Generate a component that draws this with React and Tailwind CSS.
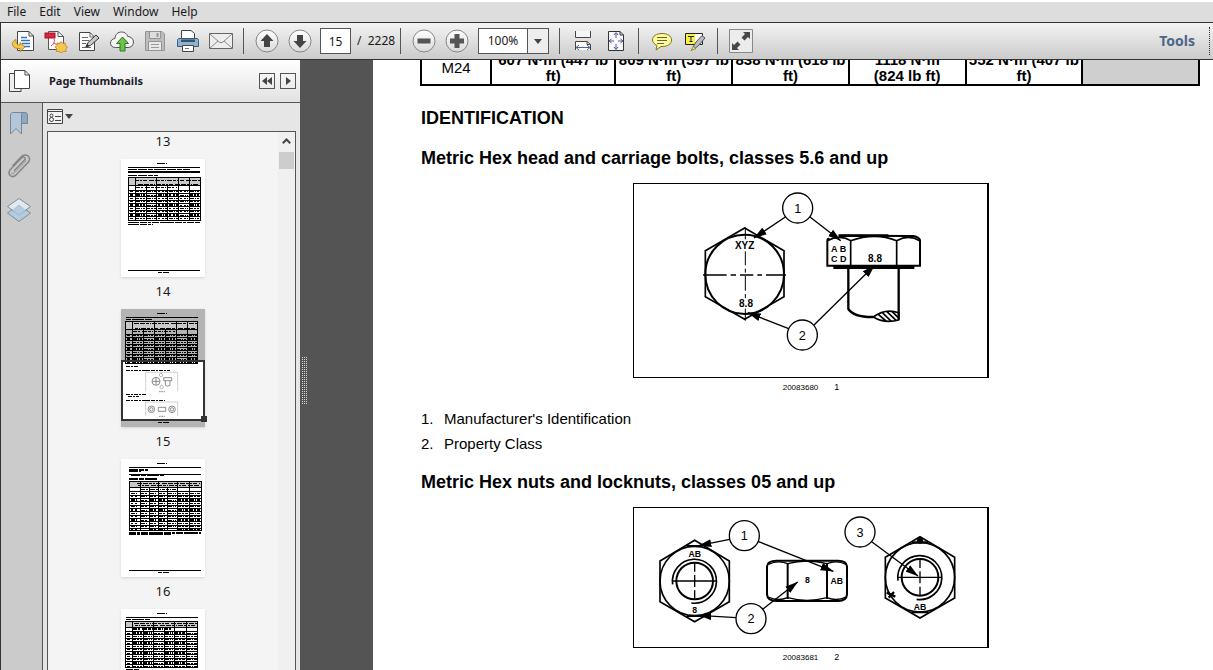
import { useState } from 'react';

const menus = ['File', 'Edit', 'View', 'Window', 'Help'];

const torqueCells = [
  ['607 N·m (447 lb', 'ft)'],
  ['809 N·m (597 lb', 'ft)'],
  ['838 N·m (618 lb', 'ft)'],
  ['1118 N·m', '(824 lb ft)'],
  ['552 N·m (407 lb', 'ft)'],
];

const thumbnails = [
  { page: 14, x: 22, top: 55, bottom: 185, head: 80, cols: [42, 75, 107, 140, 173, 204], lines: [[22, 26, 216, 4], [22, 31, 186, 5], [22, 38, 216, 5], [22, 49, 90, 4]], notes: [[22, 191, 216], [22, 197, 74]] },
  { page: 15, x: 14, top: 36, bottom: 163, head: 62, cols: [33, 66, 99, 132, 165, 198], lines: [[14, 25, 216, 3], [14, 31, 78, 4]], notes: [], selected: true },
  { page: 16, x: 24, top: 66, bottom: 215, head: 85, cols: [57, 84, 111, 138, 168, 204], lines: [[24, 26, 216, 3], [24, 33, 58, 4], [24, 38, 36, 4], [24, 46, 216, 4], [30, 50, 100, 4], [24, 60, 84, 4]], notes: [[24, 222, 216], [24, 227, 130]] },
  { page: 17, x: 14, top: 36, bottom: 176, head: 54, cols: [33, 66, 96, 129, 159, 195], lines: [[14, 25, 216, 3], [14, 31, 72, 4]], notes: [[14, 183, 40]] },
];

/* ---------- toolbar pieces ---------- */

const ToolButton = ({ label, children }) => (
  <button type="button" aria-label={label} className="flex h-8 w-[33px] shrink-0 items-center justify-center">
    {children}
  </button>
);

const Separator = () => (
  <div className="flex w-[13px] shrink-0 justify-center">
    <div className="h-[26px] w-px bg-[#555]" />
  </div>
);

const RoundIcon = ({ children }) => (
  <svg width="24" height="24" viewBox="0 0 24 24">
    <defs>
      <linearGradient id="round" x1="0" y1="0" x2="0" y2="1">
        <stop offset="0" stopColor="#fff" />
        <stop offset="1" stopColor="#d9d9d9" />
      </linearGradient>
    </defs>
    <circle cx="12" cy="12" r="11" fill="url(#round)" stroke="#858585" />
    {children}
  </svg>
);

const ExportIcon = () => (
  <svg width="24" height="24" viewBox="0 0 24 24" fill="none">
    <path d="M6.500 2.500H18L22.500 7V21.500H6.500Z" fill="#fff" stroke="#444" />
    <path d="M18 2.500V7H22.500" stroke="#444" />
    <path d="M10 8.500h6M10 11.500h9M11 14.500h8M13 17.500h6" stroke="#2e74c4" strokeWidth="1.500" />
    <path d="M5 10.500C1.500 12 1 14 1.500 16C2.500 19 6 19.800 9 19.500V22.500L14 18L9 13.500V16C6 16 4.500 14 5 10.500Z" fill="#f4c64a" stroke="#a87516" strokeWidth=".8" />
  </svg>
);

const CreatePdfIcon = () => (
  <svg width="26" height="24" viewBox="0 0 26 24" fill="none">
    <path d="M5.500 2.500H15L20.500 7.500V20.500H5.500Z" fill="#fff" stroke="#555" />
    <path d="M15 2.500V7.500H20.500" stroke="#555" />
    <rect x="2" y="4" width="10" height="5" fill="#d9243c" stroke="#9d1426" />
    <path d="M8 17C11 15 12 12 11 10M11 14C13 16 15 15 17 14" stroke="#d9243c" />
    <path d="M18 12.500l1.600 2 2.600-.6.1 2.600 2.200 1.400-1.700 2.100.4 2.600-2.600-.2L18 24l-2-1.600-2.600.2.4-2.600-1.700-2.100 2.200-1.400.1-2.600 2.600.6Z" fill="#f6c74f" stroke="#bb8422" strokeWidth=".8" />
  </svg>
);

const EditIcon = () => (
  <svg width="24" height="24" viewBox="0 0 24 24" fill="none">
    <path d="M2.500 3.500H13L17.500 8V21.500H2.500Z" fill="#fff" stroke="#444" />
    <path d="M13 3.500V8H17.500M5 8.500h6M5 11.500h7M5 14.500h4M5 18.500h9" stroke="#666" />
    <path d="M9 18L11 13.500L19 6L22 9L13.500 16.500Z" fill="#c5c9cc" stroke="#333" />
    <path d="M9 18l1.300-2.600 1.400 1.300Z" fill="#333" stroke="#333" />
  </svg>
);

const CloudIcon = () => (
  <svg width="26" height="24" viewBox="0 0 26 24" fill="none">
    <path d="M6.500 18.500C3 18.500 1.500 16.500 1.500 14C1.500 11.500 3.500 9.700 6 9.500C6 5.500 9 3 12.500 3C15.500 3 18 4.500 18.700 7.500C22 7.500 24.500 10 24.500 13C24.500 16.500 22 18.500 19 18.500Z" fill="#f5f5f5" stroke="#555" />
    <path d="M13.500 8L19.500 14.500H16V22H11V14.500H7.500Z" fill="#6cc24a" stroke="#2d7a1c" />
  </svg>
);

const SaveIcon = () => (
  <svg width="22" height="24" viewBox="0 0 22 24" fill="none">
    <path d="M1.500 2.500H18L20.500 5V21.500H1.500Z" fill="#bdbdbd" stroke="#949494" />
    <path d="M5.500 3V9.500H16.500V3" fill="#dedede" stroke="#949494" />
    <path d="M12.500 4v4h2V4Z" fill="#999" />
    <path d="M4.500 21V12.500H17.500V21" fill="#e8e8e8" stroke="#949494" />
    <path d="M7 15.500h8M7 18.500h8" stroke="#999" />
  </svg>
);

const PrintIcon = () => (
  <svg width="24" height="24" viewBox="0 0 24 24" fill="none">
    <path d="M5.500 10V1.500H15L18.500 4.500V10Z" fill="#fff" stroke="#444" />
    <path d="M3 9.500H21C22 9.500 22.500 10.500 22.500 11.500V17.500H1.500V11.500C1.500 10.500 2 9.500 3 9.500Z" fill="#8fb3cf" stroke="#3d5b75" />
    <path d="M5 10.500h14v2.500H5Z" fill="#35536e" />
    <path d="M6.500 16.500H17.500V22.500H6.500Z" fill="#fff" stroke="#444" />
    <path d="M9 19.500h4" stroke="#777" />
  </svg>
);

const MailIcon = () => (
  <svg width="26" height="24" viewBox="0 0 26 24" fill="none">
    <path d="M1.500 4.500H24.500V19.500H1.500Z" fill="#eee" stroke="#666" />
    <path d="M2 5L11 13Q13 14.500 15 13L24 5M2 19L10 12M24 19L16 12" stroke="#888" />
  </svg>
);

const ScrollPagesIcon = () => (
  <svg width="20" height="24" viewBox="0 0 20 24" fill="none">
    <path d="M2.500 2V8.500H17.500V2" fill="#f5f5f5" stroke="#444" />
    <path d="M2.500 21V12.500H14L17.500 15.500V21" fill="#fff" stroke="#444" />
    <path d="M14 12.500v3h3.500" stroke="#444" />
    <path d="M3 18.500h14M6 16l-3 2.500L6 21M14 16l3 2.500-3 2.500" stroke="#4d6591" />
  </svg>
);

const FitPageIcon = () => (
  <svg width="20" height="24" viewBox="0 0 20 24" fill="none">
    <path d="M2.500 2.500H14L17.500 6V21.500H2.500Z" fill="#f8f8ff" stroke="#333" />
    <path d="M14 2.500V6h3.500" stroke="#333" />
    <path d="M10 4v5M8 6l2-2.500L12 6M10 20v-5M8 18l2 2.500 2-2.500M3 12h5M5.500 10L3 12l2.500 2M17 12h-5M14.500 10l2.500 2-2.500 2" stroke="#4d5d91" />
  </svg>
);

const CommentIcon = () => (
  <svg width="22" height="24" viewBox="0 0 22 24" fill="none">
    <path d="M11 4.500C16.500 4.500 20.500 7 20.500 11C20.500 15 16.500 17.500 11 17.500H10L5 21L6 16.500C3 15 1.500 13 1.500 11C1.500 7 5.500 4.500 11 4.500Z" fill="#fffaa0" stroke="#7d741f" />
    <path d="M6 8.500h10M6 11.500h10M6 14.500h7" stroke="#6a6430" />
  </svg>
);

const HighlightIcon = () => (
  <svg width="22" height="24" viewBox="0 0 22 24" fill="none">
    <path d="M1.500 4.500H18.500V15.500H1.500Z" fill="#fff" stroke="#222" />
    <path d="M2 5H11V15H2Z" fill="#f8f04a" />
    <path d="M4 7.500h6M7 7.500v5M5.500 12.500h3" stroke="#222" />
    <path d="M9 18L12 13L18 6.500L21 9L15.500 15.500L11 19.500Z" fill="#b9bcc0" stroke="#555" />
    <path d="M7 21.500L9.500 17.500L12 19.500Z" fill="#f8f04a" stroke="#77712a" strokeWidth=".8" />
  </svg>
);

const FullScreenIcon = () => (
  <svg width="24" height="24" viewBox="0 0 24 24">
    <path d="M.5 .5H23.500V23.500H.5Z" fill="#ececec" stroke="#888" />
    <path d="M14 3h7v7l-2-2-3.500 3.500-3-3L16 5ZM3 14l2 2 3.500-3.500 3 3L8 19l2 2H3Z" fill="#484848" />
  </svg>
);

/* ---------- page thumbnails ---------- */

const MiniTable = ({ x, top, bottom, head, cols }) => {
  const width = 216;
  const edges = [x, ...cols, x + width];
  const rows = [];
  for (let y = head + 13; y < bottom - 4; y += 10) rows.push(y);

  return (
    <g stroke="#000">
      <rect x={x} y={top} width={width} height={head - top} fill="#c8c8c8" stroke="none" />
      <rect x={x} y={top} width={width} height={bottom - top} fill="none" strokeWidth="3" />
      {cols.map((c, i) => (
        <line key={c} x1={c} x2={c} y1={i === 1 || i === 3 ? head : top} y2={bottom} strokeWidth="3" />
      ))}
      <path d={`M${x} ${head}h${width}`} strokeWidth="3" />
      <path d={`M${x + 24} ${top + 8}h${width - 26}M${x + 28} ${head - 5}h${width - 34}`} strokeWidth="3" strokeDasharray="9 2 5 3 14 4" />
      <path d={`M${cols[0] + 3} ${head + 6}H${cols[4] - 4}`} strokeWidth="4" strokeDasharray="11 3 8 4 3 2" />
      {rows.map((y, r) => (
        <g key={y}>
          <path d={`M${x} ${y}h${width}`} strokeWidth="3" />
          {edges.slice(0, -1).map((e, c) => (
            <path
              key={e}
              d={`M${e + (c === 0 ? 5 : 3)} ${y + 5}H${edges[c + 1] - (c === 0 ? 5 : 3)}`}
              strokeWidth={(r + c) % 3 === 0 ? 3 : 4}
              strokeDasharray={(r * 3 + c) % 2 ? '8 4 6 3' : '12 3 3 4'}
            />
          ))}
        </g>
      ))}
    </g>
  );
};

const MiniFigures = () => (
  <g>
    <path d="M14 172h40M14 184h132M14 257h60M20 263h34M14 274h118" stroke="#000" strokeWidth="4" strokeDasharray="13 2 7 3" />
    <g fill="none" stroke="#555" strokeWidth="2" shapeRendering="auto">
      <path d="M74 190H170V247M74 190V247M74 279H170V321M74 279V321" stroke="#bbb" />
      <circle cx="105" cy="217" r="12" />
      <path d="M128 206h24v9h-24ZM133 216v13q7 5 14 0v-13M94 217h22M105 206v22" />
      <circle cx="120" cy="198" r="5" stroke="#999" />
      <circle cx="122" cy="234" r="5" stroke="#999" />
      <circle cx="91" cy="301" r="10" />
      <circle cx="91" cy="301" r="5" />
      <circle cx="153" cy="301" r="10" />
      <circle cx="153" cy="301" r="5" />
      <path d="M112 295h22v12h-22Z" />
      <path d="M114 248h18M114 322h18" strokeDasharray="5 2" />
    </g>
  </g>
);

const Thumbnail = ({ page, x, top, bottom, head, cols, lines, notes, selected }) => (
  <li>
    <a href={`#page-${page}`} className="flex flex-col items-center">
      <svg
        width="84"
        height="118"
        viewBox="0 0 252 354"
        shapeRendering="crispEdges"
        className={selected ? 'overflow-visible bg-[#b3b3b3] shadow' : 'bg-white shadow'}
      >
        {selected && <path d="M3 156H249V333H3Z" fill="#fff" />}
        <path d="M108 13h30" stroke="#000" strokeWidth="3" strokeDasharray="12 1" />
        {lines.map(([lx, ly, w, h], i) => (
          <path
            key={i}
            d={`M${lx} ${ly}h${w}`}
            stroke="#000"
            strokeWidth={h}
            strokeDasharray={w === 216 ? undefined : '17 1 9 2'}
          />
        ))}
        <MiniTable x={x} top={top} bottom={bottom} head={head} cols={cols} />
        {notes.map(([nx, ny, w]) => (
          <path key={ny} d={`M${nx} ${ny}h${w}`} stroke="#000" strokeWidth="4" strokeDasharray="22 2 9 2" />
        ))}
        {selected && <MiniFigures />}
        {!selected && <path d={`M${x} 335h216`} stroke="#000" strokeWidth="3" />}
        <path d="M112 340h32" stroke="#000" strokeWidth="3" strokeDasharray="12 1" />
        {selected && (
          <>
            <path d="M2 156H250V333H2Z" fill="none" stroke="#333" strokeWidth="6" />
            <path d="M239 322h18v17h-18Z" fill="#333" />
          </>
        )}
      </svg>
      <span className="pb-1 text-[13px] leading-7">{page}</span>
    </a>
  </li>
);

/* ---------- technical figures ---------- */

const Callout = ({ x, y, n }) => (
  <g>
    <circle cx={x} cy={y} r="45" fill="#fff" stroke="#000" strokeWidth="4" />
    <text x={x} y={y + 14} fontSize="38" textAnchor="middle">{n}</text>
  </g>
);

const Arrow = ({ from, to }) => (
  <line x1={from[0]} y1={from[1]} x2={to[0]} y2={to[1]} stroke="#000" strokeWidth="4" markerEnd="url(#arrow)" />
);

const ArrowDefs = () => (
  <defs>
    <marker id="arrow" markerWidth="40" markerHeight="26" refX="38" refY="13" orient="auto" markerUnits="userSpaceOnUse">
      <path d="M0 1L39 13L0 25Z" fill="#000" stroke="none" />
    </marker>
  </defs>
);

const BoltFigure = () => (
  <svg viewBox="12 10 1059 579" className="block w-full" fill="none" stroke="#000" role="img" aria-label="Bolt markings">
    <ArrowDefs />
    <path d="M344 142L462 210V348L344 416L226 348V210Z" strokeWidth="5" />
    <ellipse cx="344" cy="281" rx="118" ry="119" strokeWidth="6" />
    <path d="M219 283H290M302 283H318M330 283H370M382 283H396M408 283H468" strokeWidth="5" />
    <path d="M346 140V176M346 212V254M346 264V276M346 286V330M346 340V352M346 384V420" strokeWidth="3" />
    <path d="M598 176Q592 170 592 182V255H870V178Q868 170 850 166L626 165" strokeWidth="6" />
    <path d="M592 180Q630 160 662 180V255M662 180Q735 154 800 180V255M800 180Q836 160 869 180" strokeWidth="5" />
    <path d="M626 165H775" strokeWidth="8" />
    <path d="M610 260H853" strokeWidth="10" />
    <path d="M655 264V385Q672 410 730 409M806 264V417" strokeWidth="7" />
    <path d="M730 409Q765 382 806 396V418Q765 430 730 409Z" strokeWidth="5" />
    <path d="M745 401L768 421M757 396L784 422M770 392L799 420M786 392L804 410" strokeWidth="5" />
    <g fill="#000" stroke="none">
      <g fontWeight="bold" textAnchor="middle">
        <text x="344" y="205" fontSize="30">XYZ</text>
        <text x="348" y="380" fontSize="30">8.8</text>
        <text x="626" y="214" fontSize="27">A B</text>
        <text x="626" y="245" fontSize="27">C D</text>
        <text x="735" y="243" fontSize="30">8.8</text>
      </g>
      <Arrow from={[466, 109]} to={[372, 172]} />
      <Arrow from={[540, 109]} to={[632, 180]} />
      <Arrow from={[476, 444]} to={[354, 396]} />
      <Arrow from={[552, 433]} to={[734, 254]} />
      <Callout x={503} y={82} n="1" />
      <Callout x={517} y={463} n="2" />
    </g>
  </svg>
);

const Nut = ({ x, y }) => (
  <g>
    <path d={`M${x} ${y - 122}l104 62v122l-104 60l-104 -60v-122Z`} strokeWidth="5" />
    <circle cx={x} cy={y} r="104" strokeWidth="5" />
    <circle cx={x} cy={y} r="55" strokeWidth="6" />
    <path d={`M${x - 66} ${y + 10}A66 66 0 1 1 ${x - 10} ${y + 66}`} strokeWidth="5" />
    <path d={`M${x - 66} ${y}h132M${x} ${y - 54}v26m0 10v36m0 10v26`} strokeWidth="4" />
    <path d={`M${x - 24} ${y - 105}h48M${x - 24} ${y + 105}h48`} strokeWidth="6" />
  </g>
);

const NutFigure = () => (
  <svg viewBox="12 21 1059 417" className="block w-full" fill="none" stroke="#000" role="img" aria-label="Nut markings">
    <ArrowDefs />
    <Nut x={194} y={240} />
    <Nut x={870} y={229} />
    <path d="M440 179H624Q650 179 651 196V280Q650 299 624 300H440Q412 299 411 280V196Q412 179 440 179Z" strokeWidth="6" />
    <path d="M473 186V294M591 186V294" strokeWidth="6" />
    <path d="M415 190Q444 176 473 188Q530 172 591 188Q620 176 648 190M415 288Q444 302 473 290Q530 306 591 290Q620 302 648 288" strokeWidth="4" />
    <path d="M770 275L796 287M776 290L792 273" strokeWidth="7" />
    <circle cx="870" cy="119" r="9" fill="#000" />
    <g fill="#000" stroke="none">
      <g fontWeight="bold" textAnchor="middle">
        <text x="194" y="168" fontSize="26">AB</text>
        <text x="194" y="337" fontSize="26">8</text>
        <text x="532" y="247" fontSize="26">8</text>
        <text x="620" y="250" fontSize="26">AB</text>
        <text x="870" y="326" fontSize="26">AB</text>
      </g>
      <Arrow from={[299, 115]} to={[206, 134]} />
      <Arrow from={[384, 121]} to={[610, 211]} />
      <Arrow from={[318, 350]} to={[206, 343]} />
      <Arrow from={[398, 325]} to={[503, 243]} />
      <Arrow from={[725, 122]} to={[864, 225]} />
      <Callout x={343} y={104} n="1" />
      <Callout x={363} y={353} n="2" />
      <Callout x={690} y={93} n="3" />
    </g>
  </svg>
);

const Figure = ({ code, number, children }) => (
  <figure className="mx-auto w-[356px]">
    <div className="border border-r-2 border-black">{children}</div>
    <figcaption className="flex h-5 items-center justify-center gap-4 text-[8px]">
      <span>{code}</span>
      <span className="text-[9px]">{number}</span>
    </figcaption>
  </figure>
);

/* ---------- main areas ---------- */

const Toolbar = () => {
  const [page, setPage] = useState('15');
  const [zoom, setZoom] = useState('100%');

  return (
    <div className="flex h-[38px] shrink-0 items-center border-y border-l border-[#333] bg-linear-to-b from-[#f4f4f4] to-[#cbcbcb] pl-[5px]">
      <ToolButton label="Export"><ExportIcon /></ToolButton>
      <ToolButton label="Create PDF"><CreatePdfIcon /></ToolButton>
      <ToolButton label="Edit"><EditIcon /></ToolButton>
      <ToolButton label="Upload"><CloudIcon /></ToolButton>
      <ToolButton label="Save"><SaveIcon /></ToolButton>
      <ToolButton label="Print"><PrintIcon /></ToolButton>
      <ToolButton label="Email"><MailIcon /></ToolButton>
      <Separator />
      <ToolButton label="Previous page">
        <RoundIcon><path d="M12 5L18.500 12H15V18H9V12H5.500Z" fill="#444" /></RoundIcon>
      </ToolButton>
      <ToolButton label="Next page">
        <RoundIcon><path d="M12 19L18.500 12H15V6H9V12H5.500Z" fill="#444" /></RoundIcon>
      </ToolButton>
      <input
        type="text"
        aria-label="Page number"
        value={page}
        onChange={(e) => setPage(e.target.value)}
        className="ml-1 h-[26px] w-[31px] shrink-0 border border-[#555] bg-white text-center text-xs"
      />
      <span className="w-[43px] shrink-0 pl-1.5 text-xs whitespace-pre">/  2228</span>
      <Separator />
      <ToolButton label="Zoom out">
        <RoundIcon><path d="M5.500 9.500h13v5h-13Z" fill="#555" /></RoundIcon>
      </ToolButton>
      <ToolButton label="Zoom in">
        <RoundIcon><path d="M9.500 5h5v4.500H19v5h-4.500V19h-5v-4.500H5v-5h4.500Z" fill="#555" /></RoundIcon>
      </ToolButton>
      <div className="mr-1 ml-[5px] flex h-[26px] w-[71px] shrink-0 items-center border border-[#555] bg-white">
        <select
          aria-label="Zoom"
          value={zoom}
          onChange={(e) => setZoom(e.target.value)}
          className="h-full w-12 appearance-none text-center text-xs"
        >
          <option>50%</option>
          <option>100%</option>
          <option>200%</option>
        </select>
        <span className="flex h-full flex-1 items-center justify-center border-l border-[#555] bg-[#eee]">
          <svg width="8" height="5" viewBox="0 0 8 5"><path d="M0 0H8L4 5Z" fill="#444" /></svg>
        </span>
      </div>
      <Separator />
      <ToolButton label="Scrolling pages"><ScrollPagesIcon /></ToolButton>
      <ToolButton label="Fit page"><FitPageIcon /></ToolButton>
      <Separator />
      <ToolButton label="Comment"><CommentIcon /></ToolButton>
      <ToolButton label="Highlight text"><HighlightIcon /></ToolButton>
      <Separator />
      <ToolButton label="Full screen"><FullScreenIcon /></ToolButton>
      <button type="button" className="mr-3.5 ml-auto text-sm font-bold text-[#4b6785]">Tools</button>
      <div className="mr-[3px] h-[28px] border-l border-dotted border-[#333]" />
    </div>
  );
};

const Sidebar = () => (
  <aside className="flex w-[300px] shrink-0 flex-col border-l border-[#333] bg-[#e6e6e6]">
    <div className="flex h-[43px] shrink-0 items-center border-b border-[#555] bg-linear-to-b from-white to-[#e2e2e2] pr-1">
      <svg width="22" height="24" viewBox="0 0 22 24" fill="none" stroke="#444" className="ml-2">
        <path d="M.5 4.500H12V22.500H.5Z" fill="#eee" />
        <path d="M5.500 1.500H16L20.500 6V19.500H5.500Z" fill="#fff" />
        <path d="M16 1.500V6H20.500" />
      </svg>
      <h2 className="ml-[18px] flex-1 text-[11px] font-bold text-[#1c1c28]">Page Thumbnails</h2>
      <button type="button" aria-label="Collapse" className="flex size-4 items-center justify-center border border-[#555]">
        <svg width="10" height="8" viewBox="0 0 10 8"><path d="M5 0V8L0 4ZM10 0V8L5 4Z" fill="#444" /></svg>
      </button>
      <button type="button" aria-label="Close panel" className="ml-[5px] flex size-4 items-center justify-center border border-[#555]">
        <svg width="5" height="8" viewBox="0 0 5 8"><path d="M0 0V8L5 4Z" fill="#444" /></svg>
      </button>
    </div>

    <div className="flex min-h-0 flex-1">
      <nav className="flex w-[42px] shrink-0 flex-col items-center gap-[19px] border-r border-[#555] bg-[#cbcbcb] pt-2 pr-1.5">
        <button type="button" aria-label="Bookmarks">
          <svg width="22" height="24" viewBox="0 0 22 24" fill="#b4c7d8" stroke="#71879b">
            <path d="M13 1.500H17Q19.500 1.500 19.500 4V12.500H13Z" fill="#8ea9bf" />
            <path d="M4.500 1.500H15Q13.500 2 13.500 4V23L8 17.500L2.500 23V4Q2.500 2 4.500 1.500Z" />
          </svg>
        </button>
        <button type="button" aria-label="Attachments">
          <svg width="24" height="24" viewBox="0 0 24 24" fill="none" stroke="#858585" strokeWidth="1.500">
            <path d="M7 17L17.500 6Q19 4.500 17.500 3.500Q16 2.500 14.500 4L3 16Q1 19 3 21.500Q6 24 9 21L21.500 8Q24 4 20.500 1.500Q17 0 14 3L5.500 12" />
            <path d="M5 18Q4 20 6 20L19.500 6.500" stroke="#aaa" />
          </svg>
        </button>
        <button type="button" aria-label="Layers">
          <svg width="26" height="26" viewBox="0 0 26 26" stroke="#7c8d9c">
            <path d="M13 8L24.500 16L13 24.500L1.500 16Z" fill="#b4cce0" />
            <path d="M13 1.500L24.500 9.500L13 18L1.500 9.500Z" fill="#e9edf0" fillOpacity=".85" />
            <path d="M13 8L19 13.500L13 18L7 13.500Z" fill="#b4cce0" stroke="#a9c0d2" />
          </svg>
        </button>
      </nav>

      <div className="flex min-w-0 flex-1 flex-col px-1">
        <div className="flex h-7 shrink-0 items-center pb-0.5">
          <button type="button" aria-label="Thumbnail options" className="flex items-center gap-0.5">
            <svg width="16" height="15" viewBox="0 0 16 15" fill="none" stroke="#444">
              <path d="M.5 .5H15.500V14.500H.5Z" fill="#f2f2f2" />
              <path d="M1 2.500h14M8 7.500h6M8 11.500h6" />
              <circle cx="4.500" cy="6.500" r="1.500" />
              <circle cx="4.500" cy="10.500" r="2" />
            </svg>
            <svg width="8" height="5" viewBox="0 0 8 5"><path d="M0 0H8L4 5Z" fill="#444" /></svg>
          </button>
        </div>
        <div className="flex min-h-0 flex-1 overflow-hidden border border-b-0 border-[#555] bg-[#f4f4f4]">
          <ul className="-mt-[5px] min-w-0 flex-1">
            <li className="pb-1 text-center text-[13px] leading-7">13</li>
            {thumbnails.map((thumb) => (
              <Thumbnail key={thumb.page} {...thumb} />
            ))}
          </ul>
          <div className="flex w-[17px] flex-col items-center bg-[#f0f0f0]">
            <svg width="9" height="6" viewBox="0 0 9 6" fill="none" stroke="#444" strokeWidth="2" className="mt-1.5 mb-2">
              <path d="M.8 5.200L4.500 1.500L8.200 5.200" />
            </svg>
            <div className="h-[17px] w-[15px] bg-[#cdcdcd]" />
          </div>
        </div>
      </div>
    </div>
  </aside>
);

const DocumentPage = () => (
  <main className="min-w-0 flex-1 overflow-hidden bg-white pr-3 pl-12 font-['Liberation_Sans',Arial,sans-serif] text-black">
    <table className="-mt-[10px] -ml-px w-full table-fixed border-collapse border-2 border-black text-[15px] leading-4">
      <colgroup>
        <col className="w-[9%]" />
        <col className="w-[16%]" />
        <col className="w-[15%]" />
        <col className="w-[15%]" />
        <col className="w-[15%]" />
        <col className="w-[15%]" />
        <col className="w-[15%]" />
      </colgroup>
      <tbody>
        <tr>
          <th scope="row" className="border-2 border-black font-normal">M24</th>
          {torqueCells.map(([first, second]) => (
            <td key={first} className="border-2 border-black text-center font-bold whitespace-nowrap">
              {first}
              <br />
              {second}
            </td>
          ))}
          <td className="border-2 border-black bg-[#cfcfcf]" />
        </tr>
      </tbody>
    </table>

    <h1 className="mt-5 text-lg leading-6 font-bold">IDENTIFICATION</h1>
    <h2 className="mt-4 mb-[13px] text-lg leading-6 font-bold">Metric Hex head and carriage bolts, classes 5.6 and up</h2>
    <Figure code="20083680" number="1"><BoltFigure /></Figure>

    <ol className="mt-2 text-[15px] leading-[25px]">
      <li className="flex"><span className="w-[23px]">1.</span>Manufacturer&apos;s Identification</li>
      <li className="flex"><span className="w-[23px]">2.</span>Property Class</li>
    </ol>

    <h2 className="mt-3.5 mb-[13px] text-lg leading-6 font-bold">Metric Hex nuts and locknuts, classes 05 and up</h2>
    <Figure code="20083681" number="2"><NutFigure /></Figure>
  </main>
);

const App = () => (
  <div className="flex h-screen flex-col overflow-hidden bg-white pt-0.5 font-['Noto_Sans','Open_Sans',sans-serif] text-[#1a1a1a]">
    <nav className="flex h-5 shrink-0 items-center gap-[13px] bg-[#dddddd] pl-[7px] text-xs">
      {menus.map((menu) => (
        <button key={menu} type="button">{menu}</button>
      ))}
    </nav>
    <Toolbar />
    <div className="flex min-h-0 flex-1">
      <Sidebar />
      <div className="flex w-[73px] shrink-0 items-center bg-[#545454]">
        <svg width="5" height="48" viewBox="0 0 5 48" fill="none" stroke="#d5d5d5" strokeDasharray="1 1" className="ml-0.5 mb-[-32px]">
          <path d="M.5 0V48M2.500 0V48M4.500 0V48" />
        </svg>
      </div>
      <DocumentPage />
    </div>
  </div>
);

export default App;
